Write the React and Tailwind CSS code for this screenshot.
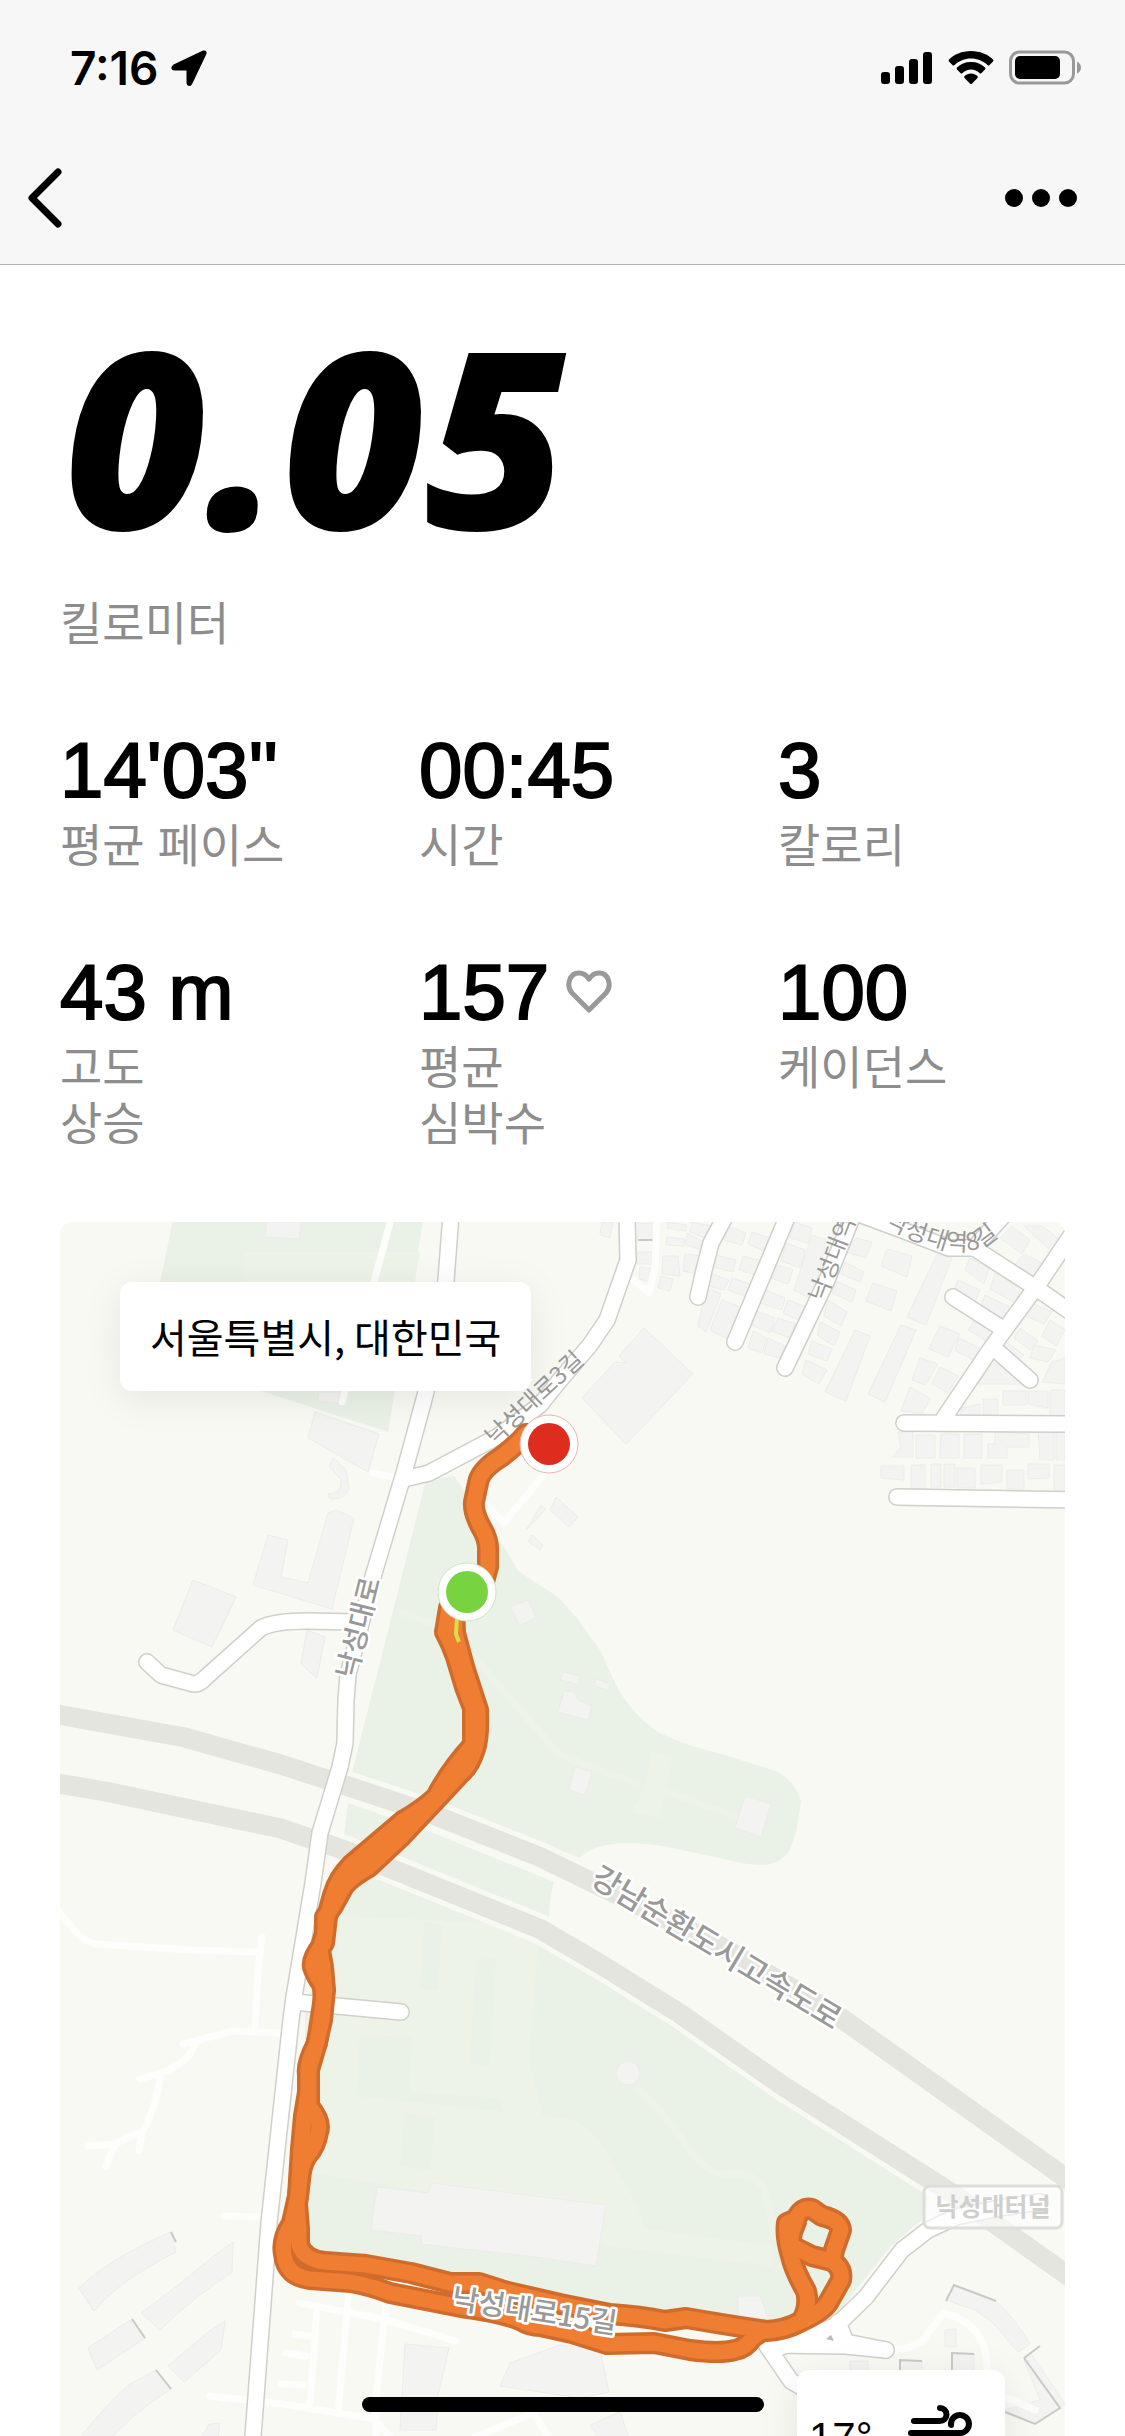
// Stats for the finished run
const STATS = [
  { value: "14'03''", label: ['평균 페이스'] },
  { value: '00:45', label: ['시간'] },
  { value: '3', label: ['칼로리'] },
  { value: '43 m', label: ['고도', '상승'] },
  { value: '157', label: ['평균', '심박수'], heart: true },
  { value: '100', label: ['케이던스'] },
];

// Streets with a casing
const ROADS = [
  'M451 1215 L446 1280 L426 1392 L404 1473 L372 1580 L348 1675 L346 1700 L345 1743 L340 1767 L320 1833 L313 1883 L294 1997 L291 2020 L269 2223 L252 2450',
  'M627 1215 L628 1260 L607 1320 L590 1345 L560 1380 L540 1405 L497 1437 L429 1473 L404 1479',
  'M355 1622 L308 1621 Q274 1621 261 1628 L205 1678 Q198 1686 190 1683 L161 1675 L147 1662',
  'M294 2002 L401 2012',
  'M726 1215 L711 1243 L704 1270 L698 1297',
  'M788 1215 L758 1287 L735 1342',
  'M853 1215 L827 1280 L785 1368',
  'M859 1214 L902 1230 L949 1248 L974 1248 L1004 1215',
  'M974 1248 L1039 1290 L1075 1315',
  'M1072 1234 L1039 1283 L992 1347 L944 1418',
  'M953 1297 L1003 1329',
  'M996 1350 L1030 1380',
  'M904 1423 L1075 1424',
  'M897 1497 L1075 1500',
  'M1040 2202 L1005 2207 L956 2217 L928 2230 L902 2250 L866 2297 L837 2325 L776 2349',
  'M838 2322 L846 2342 L886 2350',
  'M776 2345 L845 2346 L886 2350',
  'M767 2346 L791 2381 L815 2395',
];

// Footpaths, drawn as a pale line only
const PATHS = [
  'M392 1215 L342 1402',
  'M657 1215 L655 1267 L649 1293 L634 1280',
  'M373 1473 L392 1477',
  'M553 1463 L504 1523 L486 1505',
  'M56 1908 L72 1927 Q84 1943 96 1944 L190 1950 L260 1952',
  'M262 1937 L258 1970 L255 2030',
  'M279 2033 L233 2031 L183 2044',
  'M194 2046 Q188 2063 161 2073 L140 2079',
  'M161 2074 Q156 2109 142 2133 L139 2151',
  'M142 2131 L115 2144 L88 2146',
  'M115 2144 L106 2166',
  'M224 2216 L260 2217',
  'M299 2303 L383 2319 L456 2341',
  'M317 2306 L310 2406',
  'M349 2290 L338 2413',
  'M386 2303 L376 2399 L376 2440',
  'M286 2353 L306 2356',
  'M281 2384 L303 2385',
  'M295 2334 L314 2337',
  'M210 2396 L283 2404 L374 2419 L393 2440',
  'M469 2440 L533 2413 L551 2440',
  'M886 2350 Q920 2350 928 2333 L944 2313 Q990 2325 987 2375',
  'M1008 2398 L1035 2410',
];

const HIGHWAYS = [
  'M55 1714 L110 1724 L183 1737 L279 1764 L344 1785 L429 1813 L540 1857 L600 1886 L715 1943 L834 2013 L1070 2181',
  'M55 1783 L108 1792 L279 1828 L344 1850 L397 1871 L540 1929 L600 1964 L679 2013 L783 2086 L953 2194 L1070 2277',
];

const ROUTE = [
  // outbound
  'M546 1436 L526 1434 Q518 1444 501 1457 Q480 1470 478 1483 L474 1502 Q473 1512 481 1527 Q489 1540 488 1552 L488 1567 L481 1593 Q462 1605 449 1608 L445 1632 Q452 1645 456 1657 L465 1687 L473 1708 L473 1745 Q450 1770 436 1797 Q422 1810 404 1820 L351 1865 Q338 1878 333 1895 L327 1917 L324 1943 Q311 1958 313 1967 Q316 1976 322 1984 Q325 1994 322 2010 L317 2043 Q306 2064 308 2074 L308 2092 L304 2116 L301 2149 L298 2196 L292 2223 Q281 2240 284 2254 Q286 2276 310 2279 L351 2282 Q372 2286 390 2293 L461 2307 Q500 2312 520 2320 Q530 2326 540 2326 L572 2333 L607 2344 L654 2343 L690 2350 Q720 2354 735 2350 Q746 2348 752 2338 L762 2331',
  // return
  'M454 1605 L455 1633 L465 1670 L478 1710 Q479 1738 475 1749 Q470 1766 460 1774 L433 1803 L401 1837 L369 1867 Q350 1878 344 1886 L333 1906 L325 1917 L325 1933 L320 1950 L323 1967 L325 1990 L322 2020 L316 2046 L309 2070 L309 2106 Q322 2122 318 2132 Q316 2146 307 2156 Q301 2165 300 2180 L297 2204 L299 2229 L299 2245 Q304 2260 325 2262 L366 2265 L411 2273 L450 2283 L479 2283 L504 2291 L560 2304 L610 2314 Q640 2316 665 2321 L686 2318 L722 2324 L767 2331 Q785 2330 800 2322 Q822 2312 828 2303 L841 2280 Q843 2268 832 2261 L812 2256 L790 2245',
  // loop at the turning point
  'M802 2320 Q810 2306 806 2291 Q794 2270 791 2256 Q785 2236 787 2223 L796 2219 Q802 2206 812 2209 L822 2216 Q840 2220 841 2230 L834 2250 L832 2262',
  'M797 2219 L792 2232 L790 2245',
];

const PARKS = [
  'M174 1215 L424 1215 L388 1432 L261 1391 L145 1355 Z',
  'M426 1480 L454 1476 L508 1553 L518 1571 L558 1597 L576 1617 L600 1650 L616 1685 Q630 1712 655 1730 Q677 1743 718 1753 L773 1770 Q796 1780 801 1802 L796 1832 L790 1850 Q779 1865 762 1865 L747 1864 L668 1847 Q600 1836 580 1858 L463 1812 L352 1773 Z',
  'M348 1803 L433 1833 L554 1882 Q549 1900 549 1920 L383 1850 L344 1835 Z',
  'M345 1872 L376 1874 L465 1907 L540 1942 L600 1978 L652 2012 L783 2102 L928 2196 L924 2218 L891 2246 L834 2318 L767 2325 L480 2290 L305 2255 L305 2010 Z',
];

const LAWNS = [
  'M342 1916 L540 1925 L529 2060 L543 2116 L575 2120 L600 2140 L614 2166 L636 2203 L646 2229 L772 2246 L772 2266 L607 2246 L480 2200 L307 2172 Z',
  'M244 1252 L420 1252 L412 1300 L244 1300 Z',
  'M652 1752 L673 1757 L662 1802 L660 1818 L632 1812 L645 1785 Z',
];

const LAWN_SHADE = [
  'M360 2035 L412 2037 L410 2092 L500 2098 L504 2112 L356 2096 Z',
  'M476 1960 L496 1958 L490 2066 L470 2064 Z',
  'M405 2113 L435 2118 L430 2170 L400 2166 Z',
  'M424 1921 L442 1925 L438 1990 L420 1990 Z',
];

const BUILDINGS = [
  // west side
  'M266 1222 L301 1222 L299 1239 L266 1237 Z',
  'M319 1392 L340 1392 L338 1403 L318 1401 Z',
  'M315 1412 L379 1434 L368 1472 L308 1438 Z',
  'M334 1458 L346 1470 L349 1488 Q346 1500 330 1499 L328 1494 Q342 1494 341 1480 L329 1466 Z',
  'M336 1510 L354 1518 L332 1609 L253 1585 L268 1535 L288 1540 L281 1577 L308 1583 L328 1513 Z',
  'M193 1580 L236 1597 L212 1647 L173 1630 Z',
  'M307 1630 L325 1637 L317 1678 L301 1664 Z',
  'M79 2288 Q110 2258 171 2232 L176 2252 Q120 2280 94 2311 Z',
  'M233 2242 L232 2272 Q190 2300 160 2330 L141 2313 Q180 2285 215 2255 Z',
  'M132 2319 L145 2338 L97 2370 L88 2348 Z',
  'M225 2321 L221 2350 L184 2382 L168 2366 L207 2333 Z',
  'M156 2370 L171 2389 Q130 2415 110 2440 L78 2440 Q110 2400 130 2384 Z',
  'M209 2424 L220 2423 L218 2440 L200 2440 Z',
  'M405 2344 L449 2348 L438 2395 L436 2430 L400 2430 L402 2395 Z',
  'M510 2363 L560 2345 L600 2350 L609 2392 L580 2398 L500 2386 Z',
  // inside the park
  'M377 2187 L428 2193 L432 2183 L606 2205 L596 2266 L536 2257 L421 2244 L422 2236 L371 2230 Z',
  'M510 1607 L528 1600 L536 1618 L520 1625 Z',
  'M563 1672 L580 1676 L579 1685 L561 1680 Z',
  'M596 1679 L610 1684 L608 1690 L594 1686 Z',
  'M564 1691 L575 1692 L578 1700 L592 1706 L588 1720 L558 1712 Z',
  'M575 1767 L592 1772 L585 1795 L569 1790 Z',
  'M745 1796 L771 1804 L761 1837 L735 1828 Z',
  'M738 2296 L760 2296 L768 2318 L738 2320 Z',
  'M526 1530 L541 1505 L546 1509 L529 1527 Z',
  'M556 1497 L578 1517 L569 1527 L550 1510 Z',
  'M532 1535 L543 1545 L540 1550 L528 1541 Z',
  // hall north of the finish
  'M644 1328 L693 1374 L669 1399 L626 1444 L582 1398 L615 1362 L626 1363 L619 1356 Z',
  // housing blocks, north east
  'M602 1222 L613 1222 L610 1238 L600 1235 Z',
  'M638 1223 L652 1223 L652 1240 L638 1240 Z',
  'M638 1252 L652 1252 L652 1264 L637 1264 Z',
  'M640 1267 L652 1269 L650 1282 L639 1279 Z',
  'M663 1256 L678 1256 L680 1276 L662 1274 Z',
  'M661 1276 L673 1279 L670 1291 L658 1288 Z',
  'M668 1222 L687 1225 L686 1231 L667 1228 Z',
  'M667 1237 L685 1239 L684 1246 L666 1245 Z',
  'M692 1222 L712 1226 L710 1240 L690 1232 Z',
  'M687 1233 L706 1243 L702 1250 L686 1245 Z',
  'M685 1254 L700 1256 L696 1274 L683 1271 Z',
  'M716 1255 L736 1260 L733 1272 L713 1267 Z',
  'M712 1274 L729 1280 L724 1290 L709 1286 Z',
  'M706 1288 L721 1294 L706 1332 L698 1326 Z',
  'M722 1300 L743 1308 L729 1340 L710 1330 Z',
  'M728 1226 L746 1233 L742 1245 L724 1240 Z',
  'M752 1232 L770 1238 L764 1251 L748 1244 Z',
  'M743 1256 L762 1261 L756 1275 L739 1270 Z',
  'M732 1278 L750 1284 L746 1296 L728 1290 Z',
  'M794 1222 L812 1228 L808 1243 L790 1238 Z',
  'M786 1243 L805 1250 L801 1268 L781 1261 Z',
  'M774 1264 L793 1270 L788 1284 L768 1277 Z',
  'M765 1290 L785 1298 L782 1310 L760 1303 Z',
  'M788 1300 L806 1307 L801 1321 L783 1313 Z',
  'M756 1311 L775 1318 L770 1333 L752 1325 Z',
  'M778 1318 L795 1324 L790 1338 L772 1331 Z',
  'M753 1331 L767 1338 L762 1353 L748 1348 Z',
  'M768 1338 L785 1346 L780 1358 L764 1354 Z',
  'M812 1235 L826 1240 L813 1300 L794 1290 Z',
  'M856 1238 L872 1242 L866 1258 L846 1252 Z',
  'M845 1262 L864 1272 L860 1282 L841 1274 Z',
  'M836 1281 L856 1290 L852 1302 L832 1293 Z',
  'M828 1300 L847 1312 L841 1326 L824 1316 Z',
  'M820 1322 L840 1332 L834 1346 L818 1336 Z',
  'M812 1341 L832 1349 L827 1361 L808 1354 Z',
  'M806 1360 L827 1370 L819 1384 L802 1374 Z',
  'M887 1249 L912 1256 L907 1277 L881 1266 Z',
  'M873 1283 L897 1291 L891 1311 L866 1301 Z',
  'M937 1254 L952 1258 L926 1325 L907 1317 Z',
  'M901 1325 L916 1330 L885 1402 L868 1394 Z',
  'M855 1330 L870 1336 L846 1401 L825 1392 Z',
  'M970 1258 L989 1268 L984 1284 L965 1270 Z',
  'M958 1280 L980 1290 L975 1302 L954 1290 Z',
  'M996 1270 L1022 1285 L1015 1303 L990 1289 Z',
  'M985 1295 L1012 1308 L1004 1318 L980 1308 Z',
  'M975 1320 L996 1334 L988 1342 L968 1330 Z',
  'M940 1326 L960 1334 L948 1357 L929 1349 Z',
  'M959 1338 L980 1348 L973 1360 L955 1350 Z',
  'M920 1358 L938 1364 L925 1385 L912 1380 Z',
  'M940 1367 L958 1376 L948 1393 L932 1384 Z',
  'M910 1387 L931 1399 L922 1413 L901 1411 Z',
  'M992 1362 L1020 1376 L1020 1384 L978 1384 Z',
  'M1000 1238 L1012 1226 L1030 1240 L1022 1254 Z',
  'M1024 1226 L1042 1226 L1060 1240 L1052 1252 Z',
  'M1024 1254 L1046 1265 L1034 1280 L1012 1268 Z',
  'M1030 1302 L1052 1312 L1044 1324 L1026 1316 Z',
  'M1050 1320 L1065 1330 L1056 1346 L1042 1336 Z',
  'M1020 1328 L1038 1341 L1030 1350 L1014 1338 Z',
  'M1006 1342 L1024 1355 L1016 1362 L1002 1352 Z',
  'M1034 1345 L1056 1350 L1048 1362 L1030 1358 Z',
  'M1052 1362 L1065 1358 L1065 1384 L1042 1382 Z',
  'M1003 1391 L1026 1391 L1026 1405 L1003 1405 Z',
  'M1028 1391 L1048 1391 L1048 1408 L1028 1404 Z',
  'M1050 1390 L1065 1390 L1065 1417 L1050 1417 Z',
  'M983 1399 L998 1399 L998 1415 L983 1415 Z',
  'M962 1408 L980 1404 L980 1416 L960 1416 Z',
  'M898 1432 L913 1432 L913 1457 L892 1457 L901 1447 Z',
  'M916 1435 L935 1435 L935 1458 L916 1458 Z',
  'M941 1434 L959 1434 L959 1458 L940 1458 Z',
  'M964 1434 L982 1434 L982 1458 L964 1458 Z',
  'M995 1432 L1029 1434 L1029 1447 L1007 1447 L1007 1458 L988 1458 L988 1444 L995 1444 Z',
  'M1038 1430 L1054 1430 L1054 1460 L1040 1460 Z',
  'M1056 1430 L1065 1430 L1065 1460 L1056 1460 Z',
  'M881 1466 L904 1466 L904 1480 L881 1478 Z',
  'M911 1465 L925 1465 L925 1489 L911 1489 Z',
  'M931 1464 L941 1464 L941 1487 L931 1487 Z',
  'M944 1464 L955 1464 L955 1487 L944 1487 Z',
  'M957 1468 L975 1468 L975 1488 L957 1488 Z',
  'M981 1465 L1002 1465 L1002 1482 L981 1484 Z',
  'M1007 1470 L1024 1470 L1024 1489 L1007 1489 Z',
  'M1028 1464 L1049 1464 L1049 1478 L1028 1479 Z',
  'M1054 1465 L1065 1465 L1065 1492 L1054 1492 Z',
  // south east
  'M953 2286 L996 2301 Q1015 2318 1030 2344 L1018 2352 L992 2322 L975 2310 L946 2300 Z',
  'M1030 2352 L1065 2404 L1035 2424 L1005 2410 L1040 2400 L1024 2360 Z',
  'M945 2330 L956 2329 L956 2347 L945 2347 Z',
  'M900 2361 L922 2361 L922 2372 L900 2372 Z',
  'M952 2353 L974 2354 L974 2372 L952 2372 Z',
  'M850 2361 L868 2361 L868 2372 L850 2372 Z',
  'M590 2425 L620 2412 L630 2440 L600 2440 Z',
];

const BUILDING_EDGES = 'M946 2301 L954 2285 L996 2301 M1024 2358 L1040 2346 M1005 2412 L1035 2424 L1060 2408 L1024 2358 M952 2372 V2353 L974 2354 M900 2372 V2360 L922 2361 M171 2232 L176 2242 M132 2319 L145 2338 M156 2370 L171 2389 M638 1240 H653';

const CellularIcon = () => (
  <svg className="h-9 w-13" viewBox="0 0 52 36" aria-hidden="true">
    <rect x="0" y="22" width="9" height="12" rx="3" />
    <rect x="14" y="16" width="9" height="18" rx="3" />
    <rect x="28" y="9" width="9" height="25" rx="3" />
    <rect x="42" y="2" width="9" height="32" rx="3" />
  </svg>
);

const WifiIcon = () => (
  <svg className="h-9 w-[46px]" viewBox="0 0 46 36" aria-hidden="true">
    <path d="M23 1 C32 1 40 4.500 45 9.500 Q46 10.500 45 11.500 L41.500 15 Q40.500 16 39.500 15 C35 11 29.500 8.500 23 8.500 C16.500 8.500 11 11 6.500 15 Q5.500 16 4.500 15 L1 11.500 Q0 10.500 1 9.500 C6 4.500 14 1 23 1 Z" />
    <path d="M23 12 C29 12 33.500 14 37 17.500 Q38 18.500 37 19.500 L33.500 23 Q32.500 24 31.500 23 C29 21 26.500 19.500 23 19.500 C19.500 19.500 17 21 14.500 23 Q13.500 24 12.500 23 L9 19.500 Q8 18.500 9 17.500 C12.500 14 17 12 23 12 Z" />
    <path d="M23 23.500 C25.500 23.500 27.500 24.500 29.500 26 Q30 27 29.500 28 L23.800 33.700 Q23 34.500 22.200 33.700 L16.500 28 Q16 27 16.500 26 C18.500 24.500 20.500 23.500 23 23.500 Z" />
  </svg>
);

const BatteryIcon = () => (
  <svg className="h-9 w-18" viewBox="0 0 72 36" aria-hidden="true">
    <rect x="1.500" y="2" width="63" height="31" rx="9" fill="none" stroke="#999" strokeWidth="3" />
    <rect x="6" y="6" width="45" height="23" rx="5" />
    <path d="M68 11.500 Q72 13.500 72 17.500 Q72 21.500 68 23.500 Z" fill="#999" />
  </svg>
);

const LocationIcon = () => (
  <svg className="h-9 w-9" viewBox="0 0 36 36" stroke="currentColor" strokeWidth="2" strokeLinejoin="round" aria-hidden="true">
    <path d="M32.500 1.500 L3 15.500 Q1 17 1.500 18.500 Q2 19.500 4 19.500 H15.500 Q16.500 19.500 16.500 20.500 V32 Q16.500 35 18.500 35 Q19.500 35 20.500 33 L34.500 3.500 Q35 1 32.500 1.500 Z" />
  </svg>
);

const HeartIcon = () => (
  <svg className="h-12 w-12" viewBox="0 0 48 48" fill="none" stroke="#999" strokeWidth="5" strokeLinejoin="round" aria-hidden="true">
    <path d="M24 42 L7 25 C1 18 4 5 14 5 C19 5 22 8 24 11 C26 8 29 5 34 5 C44 5 47 18 41 25 Z" />
  </svg>
);

const WindIcon = () => (
  <svg className="size-[66px]" viewBox="0 0 66 66" fill="none" stroke="currentColor" strokeWidth="6" strokeLinecap="round" aria-label="바람">
    <path d="M7 17 H33 A6.500 6.500 0 0 0 33 4" />
    <path d="M4 29 H53 A9 9 0 1 0 44 21" />
    <path d="M10 41 H38 A7 7 0 1 1 31 48" />
  </svg>
);

const StatusBar = () => (
  <div className="flex h-34 items-center justify-between pr-11 pl-[70px]">
    <div className="flex items-center gap-3">
      <span className="font-['Inter',sans-serif] text-[46px] leading-none font-semibold">7:16</span>
      <LocationIcon />
    </div>
    <div className="flex items-center gap-[15px]">
      <CellularIcon />
      <WifiIcon />
      <BatteryIcon />
    </div>
  </div>
);

const NavBar = () => (
  <nav className="flex h-31 items-center justify-between px-5">
    <button type="button" aria-label="뒤로" className="p-1">
      <svg className="h-16 w-10" viewBox="0 0 40 64" fill="none" stroke="currentColor" strokeWidth="7" strokeLinecap="round" strokeLinejoin="round">
        <path d="M34 6 L8 32 L34 58" />
      </svg>
    </button>
    <button type="button" aria-label="더 보기" className="flex gap-[9px] p-7">
      <span className="size-[18px] rounded-full bg-black" />
      <span className="size-[18px] rounded-full bg-black" />
      <span className="size-[18px] rounded-full bg-black" />
    </button>
  </nav>
);

const Stat = ({ value, label, heart }) => (
  <div>
    <dd className="flex items-center gap-4 text-[78px] leading-24 [-webkit-text-stroke:2px_black]">
      {value}
      {heart && <HeartIcon />}
    </dd>
    <dt className="text-[46px] leading-14 text-[#8d8d8d]">
      {label.map((line) => (
        <span key={line} className="block">{line}</span>
      ))}
    </dt>
  </div>
);

const RouteMap = () => (
  <svg className="absolute inset-0 h-full w-full" viewBox="60 1222 1005 1214" preserveAspectRatio="xMidYMin slice" role="img" aria-label="러닝 경로 지도">
    <rect x="60" y="1222" width="1005" height="1600" fill="#f8f9f3" />
    <g fill="#eaf1e6">
      {PARKS.map((d) => <path key={d} d={d} />)}
    </g>
    <g fill="#eef3e8">
      {LAWNS.map((d) => <path key={d} d={d} />)}
    </g>
    <g fill="#eaf1e6">
      {LAWN_SHADE.map((d) => <path key={d} d={d} />)}
    </g>
    <g fill="none" stroke="#eef3e8" strokeWidth="7">
      <path d="M400 1612 L450 1630 L560 1755 L640 1785 M662 1790 L745 1820" />
      <path d="M636 2086 Q670 2120 690 2150 Q710 2178 730 2174 Q755 2172 765 2190 L775 2240" />
    </g>
    <g fill="#f3f3f1" stroke="#ecece9" strokeWidth="1">
      {BUILDINGS.map((d) => <path key={d} d={d} />)}
      <circle cx="628" cy="2073" r="12" />
    </g>
    <path d={BUILDING_EDGES} fill="none" stroke="#c9c9c6" strokeWidth="2" />

    <g fill="none" strokeLinejoin="round">
      <g stroke="#f8f9f3" strokeWidth="30">
        {HIGHWAYS.map((d) => <path key={d} d={d} />)}
      </g>
      <g stroke="#e5e5df" strokeWidth="20">
        {HIGHWAYS.map((d) => <path key={d} d={d} />)}
      </g>
      <g stroke="#fdfdfb" strokeWidth="7" strokeLinecap="round">
        {PATHS.map((d) => <path key={d} d={d} />)}
      </g>
      <g stroke="#d0cfca" strokeWidth="18" strokeLinecap="round">
        {ROADS.map((d) => <path key={d} d={d} />)}
      </g>
      <g stroke="#fff" strokeWidth="15" strokeLinecap="round">
        {ROADS.map((d) => <path key={d} d={d} />)}
      </g>
    </g>
    <path d="M780 2340 L838 2318 L846 2344 Z" fill="#fff" />
    <path d="M826 2339 L831 2335 L834 2341 Z" fill="#bbb" />

    <g fill="none" strokeLinejoin="round">
      <g stroke="#cf6c2c" strokeWidth="22">
        {ROUTE.map((d) => <path key={d} d={d} />)}
      </g>
      <g stroke="#ef7d32" strokeWidth="15">
        {ROUTE.map((d) => <path key={d} d={d} />)}
      </g>
      <path d="M457 1618 L456 1634 L459 1642" stroke="#dcdc46" strokeWidth="4" />
    </g>

    <g fontFamily="'Noto Sans CJK KR', sans-serif" fill="#999" textAnchor="middle">
      <g fontSize="24">
        <text transform="translate(540 1404) rotate(-43)">낙성대로3길</text>
        <text transform="translate(824 1303) rotate(-69)" textAnchor="start">낙성대역</text>
        <path id="alley" d="M884 1226 L914 1240 L945 1250 L966 1251 Q984 1250 995 1238 L1018 1210" fill="none" />
        <text textAnchor="start">
          <textPath href="#alley">낙성대역8길</textPath>
        </text>
      </g>
      <g fontWeight="500" stroke="#fff" strokeWidth="5" strokeLinejoin="round" paintOrder="stroke">
        <text fontSize="28" transform="translate(368 1630) rotate(-76)">낙성대로</text>
        <text fontSize="31" transform="translate(711 1957) rotate(31)">강남순환도시고속도로</text>
        <text fontSize="29" transform="translate(533 2321) rotate(9)">낙성대로15길</text>
      </g>
      <rect x="924" y="2186" width="138" height="42" rx="6" fill="#fff" fillOpacity=".6" stroke="#dddddb" strokeWidth="3" />
      <text x="993" y="2216" fontSize="25" fontWeight="700" fill="#cfcfcd">낙성대터널</text>
    </g>

    <circle cx="549" cy="1444" r="29" fill="#fff" stroke="#e9b5b0" strokeWidth="1" />
    <circle cx="549" cy="1444" r="21" fill="#de2d1e" />
    <circle cx="467" cy="1592" r="29" fill="#fff" stroke="#cfe8c0" strokeWidth="1" />
    <circle cx="467" cy="1592" r="21" fill="#78d340" />
  </svg>
);

export default function App() {
  return (
    <div className="relative flex h-screen flex-col overflow-hidden bg-white font-['Liberation_Sans','Noto_Sans_CJK_KR',sans-serif] text-black">
      <header className="shrink-0 border-b border-[#b3b3b3] bg-[#f7f7f7] pb-1">
        <StatusBar />
        <NavBar />
      </header>

      <main className="flex min-h-0 flex-1 flex-col px-15">
        <h1 className="pt-2 pl-1 font-['Open_Sans',sans-serif] text-[246px] leading-[323px] font-extrabold italic">0.05</h1>
        <p className="text-[46px] leading-14 text-[#8d8d8d]">킬로미터</p>

        <dl className="grid grid-cols-[359fr_359fr_287fr] gap-y-[70px] pt-[70px]">
          {STATS.map((stat) => (
            <Stat key={stat.value} {...stat} />
          ))}
        </dl>

        <section className="relative mt-[70px] min-h-0 flex-1 overflow-hidden rounded-t-xl">
          <RouteMap />
          <p className="absolute top-15 left-15 rounded-xl bg-white px-[30px] py-6 font-['Noto_Sans_CJK_KR',sans-serif] text-[40px] leading-[61px] shadow-[0_8px_40px_rgba(0,0,0,0.08)]">
            서울특별시, 대한민국
          </p>
          <div className="absolute right-15 -bottom-17 flex h-[134px] w-[208px] items-center justify-between rounded-xl bg-white pr-8 pl-3 shadow-[0_8px_40px_rgba(0,0,0,0.08)]">
            <span className="text-[42px]">17°</span>
            <WindIcon />
          </div>
        </section>
      </main>

      <div className="absolute bottom-6 left-1/2 h-[15px] w-[402px] -translate-x-1/2 rounded-full bg-black" />
    </div>
  );
}
